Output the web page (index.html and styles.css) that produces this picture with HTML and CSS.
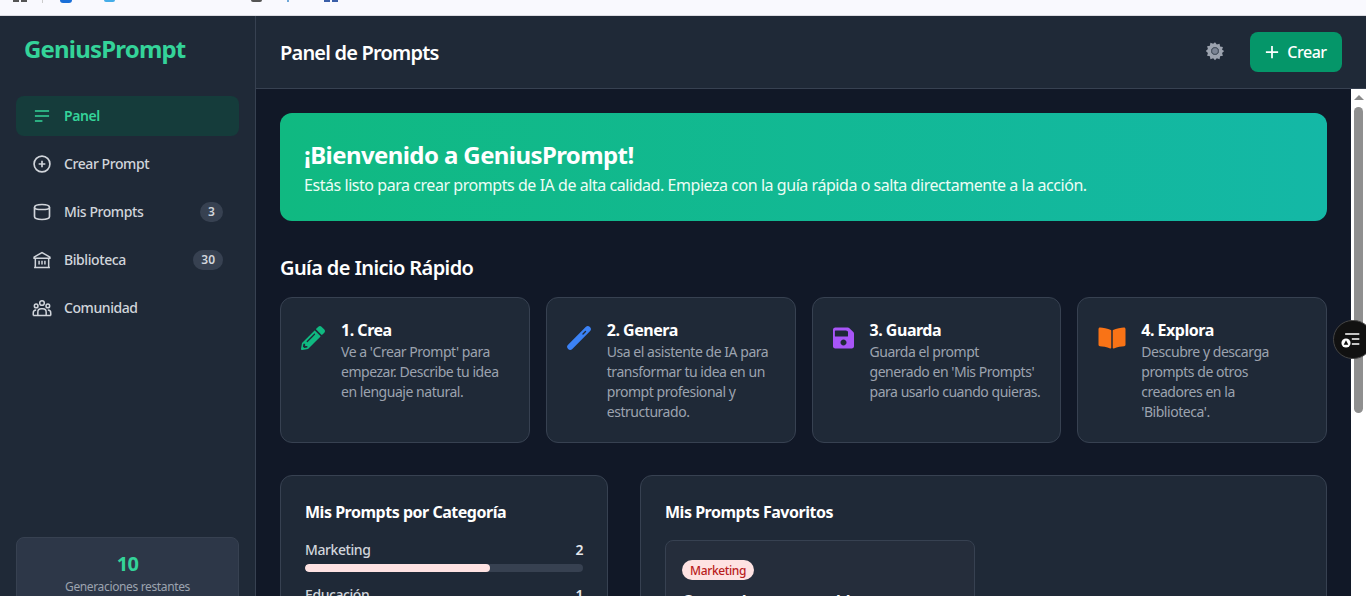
FILE: index.html
```html
<!DOCTYPE html>
<html lang="es">
<head>
<meta charset="utf-8">
<title>GeniusPrompt</title>
<link rel="stylesheet" href="styles.css">
</head>
<body>
<div class="browserstrip">
  <span class="strip-a"></span><span class="strip-b"></span><span class="strip-c"></span><span class="strip-d"></span><span class="strip-e"></span><span class="strip-g"></span><span class="strip-f"></span>
</div>
<div class="app">
  <aside class="sidebar">
    <div class="logo">GeniusPrompt</div>
    <nav class="nav">
      <a class="nav-item active">
        <svg class="nav-icon" viewBox="0 0 24 24" fill="none" stroke="currentColor" stroke-width="2"><path d="M3.500 6h17M3.500 12h17M3.500 18h9"/></svg>
        <span>Panel</span>
      </a>
      <a class="nav-item">
        <svg class="nav-icon" viewBox="0 0 24 24" fill="none" stroke="currentColor" stroke-width="2"><circle cx="12" cy="12" r="9.500"/><path d="M12 8v8M8 12h8"/></svg>
        <span>Crear Prompt</span>
      </a>
      <a class="nav-item">
        <svg class="nav-icon" viewBox="0 0 24 24" fill="none" stroke="currentColor" stroke-width="2"><path d="M3 6.500c0-2 4-3.500 9-3.500s9 1.500 9 3.500v11c0 2-4 3.500-9 3.500s-9-1.500-9-3.500z"/><path d="M3 6.500c0 1.500 4 2.500 9 2.500s9-1 9-2.500"/></svg>
        <span>Mis Prompts</span><b class="badge">3</b>
      </a>
      <a class="nav-item">
        <svg class="nav-icon" viewBox="0 0 24 24" fill="none" stroke="currentColor" stroke-width="1.800"><path d="M2.500 8.500L12 3l9.500 5.500v1.500h-19z"/><path d="M4 10v10M20 10v10M8.500 13v4.500M12 13v4.500M15.500 13v4.500M2.500 21h19"/></svg>
        <span>Biblioteca</span><b class="badge">30</b>
      </a>
      <a class="nav-item">
        <svg class="nav-icon" viewBox="0 0 24 24" fill="none" stroke="currentColor" stroke-width="1.800"><circle cx="12" cy="6" r="2.800"/><circle cx="5" cy="9.500" r="2.200"/><circle cx="19" cy="9.500" r="2.200"/><path d="M7 21v-4a4 4 0 0 1 4-4h2a4 4 0 0 1 4 4v4zM1.500 21v-3a3.500 3.500 0 0 1 3.500-3.500M22.500 21v-3a3.500 3.500 0 0 0-3.500-3.500M1.500 21h21"/></svg>
        <span>Comunidad</span>
      </a>
    </nav>
    <div class="credits">
      <div class="credits-num">10</div>
      <div class="credits-label">Generaciones restantes</div>
    </div>
  </aside>
  <div class="main">
    <header class="topbar">
      <h1 class="title">Panel de Prompts</h1>
      <div class="actions">
        <svg class="gear" viewBox="0 0 24 24"><path fill="#9ca3af" fill-rule="evenodd" d="M12 1.500l2.200 2.700 3.300-1 .6 3.400 3.400.6-1 3.300L23 12l-2.500 2.500 1 3.300-3.400.6-.6 3.400-3.300-1L12 23l-2.200-2.200-3.300 1-.6-3.400-3.400-.6 1-3.300L1 12l2.500-2.500-1-3.300 3.400-.6.6-3.400 3.300 1zM12 7.500a4.500 4.500 0 1 0 0 9 4.500 4.500 0 0 0 0-9z"/><circle cx="12" cy="12" r="4" fill="#7b8494" stroke="#4b5563" stroke-width="1"/></svg>
        <button class="create"><svg class="plus" viewBox="0 0 16 16" fill="none" stroke="currentColor" stroke-width="2"><path d="M8 1v14M1 8h14"/></svg>Crear</button>
      </div>
    </header>
    <div class="scrollwrap">
      <main class="content">
        <section class="hero">
          <h2>¡Bienvenido a GeniusPrompt!</h2>
          <p>Estás listo para crear prompts de IA de alta calidad. Empieza con la guía rápida o salta directamente a la acción.</p>
        </section>
        <h3 class="guide-title">Guía de Inicio Rápido</h3>
        <section class="steps">
          <article class="step">
            <svg class="step-icon green" viewBox="0 0 512 512"><path fill="currentColor" d="M497.900 142.100l-46.100 46.100c-4.700 4.700-12.300 4.700-17 0l-111-111c-4.700-4.700-4.700-12.300 0-17l46.100-46.100c18.700-18.700 49.100-18.700 67.900 0l60.100 60.100c18.800 18.700 18.800 49.100 0 67.900zM284.200 99.800L21.600 362.400.4 483.900c-2.900 16.400 11.400 30.600 27.800 27.800l121.500-21.300 262.600-262.600c4.700-4.700 4.700-12.300 0-17l-111-111c-4.800-4.700-12.400-4.700-17.100 0zM124.100 339.900c-5.500-5.500-5.500-14.300 0-19.800l154-154c5.500-5.500 14.300-5.500 19.800 0s5.500 14.300 0 19.800l-154 154c-5.500 5.500-14.300 5.500-19.800 0zM88 424h48v36.300l-64.500 11.300-31.100-31.100L51.700 376H88v48z"/></svg>
            <div class="step-body"><h4>1. Crea</h4><p>Ve a 'Crear Prompt' para empezar. Describe tu idea en lenguaje natural.</p></div>
          </article>
          <article class="step">
            <svg class="step-icon blue" viewBox="0 0 24 24" fill="none"><path d="M3.200 20.800L20.800 3.200" stroke="currentColor" stroke-width="6" stroke-linecap="round"/><path d="M16 8l2.500-2.500" stroke="#1f2937" stroke-width="1.400" stroke-linecap="round"/></svg>
            <div class="step-body"><h4>2. Genera</h4><p>Usa el asistente de IA para transformar tu idea en un prompt profesional y estructurado.</p></div>
          </article>
          <article class="step">
            <svg class="step-icon purple" viewBox="0 0 448 512"><path fill="currentColor" d="M433.900 129.900l-83.900-83.900A48 48 0 0 0 316.100 32H48C21.500 32 0 53.500 0 80v352c0 26.500 21.500 48 48 48h352c26.500 0 48-21.500 48-48V163.900a48 48 0 0 0-14.100-34zM224 416c-35.300 0-64-28.700-64-64 0-35.300 28.700-64 64-64s64 28.700 64 64c0 35.300-28.700 64-64 64zm96-304.500V212c0 6.600-5.400 12-12 12H52c-6.600 0-12-5.400-12-12V108c0-6.600 5.400-12 12-12h228.500c3.200 0 6.200 1.300 8.500 3.500l3.500 3.500c2.200 2.300 3.500 5.300 3.500 8.500z"/></svg>
            <div class="step-body"><h4>3. Guarda</h4><p>Guarda el prompt generado en 'Mis Prompts' para usarlo cuando quieras.</p></div>
          </article>
          <article class="step step-last">
            <svg class="step-icon orange" viewBox="0 0 576 512"><path fill="currentColor" d="M542.200 32.100c-54.800 3.100-163.700 14.400-231 55.600-4.600 2.800-7.300 7.900-7.300 13.200v364.400c0 11.600 12.600 18.900 23.300 13.500 69.200-34.800 169.200-44.300 218.700-46.900 16.900-.9 30.100-14.400 30.100-30.700V62.800c0-17.800-15.400-31.700-33.800-30.700zM264.700 87.600C197.500 46.500 88.600 35.200 33.800 32.100 15.400 31.100 0 45 0 62.800V401.600c0 16.400 13.200 29.900 30.100 30.700 49.500 2.600 149.600 12.100 218.800 47 10.700 5.400 23.200-1.900 23.200-13.500V100.600c0-5.300-2.600-10.200-7.400-13z"/></svg>
            <div class="step-body"><h4>4. Explora</h4><p>Descubre y descarga prompts de otros creadores en la 'Biblioteca'.</p></div>
          </article>
        </section>
        <section class="panels">
          <article class="panel cats">
            <h4 class="panel-title">Mis Prompts por Categoría</h4>
            <div class="cat-row"><span>Marketing</span><b>2</b></div>
            <div class="bar"><div class="fill" style="width:66.600%"></div></div>
            <div class="cat-row"><span>Educación</span><b>1</b></div>
          </article>
          <article class="panel favs">
            <h4 class="panel-title">Mis Prompts Favoritos</h4>
            <div class="fav-card">
              <span class="tag">Marketing</span>
              <div class="fav-title">Correo de ventas en blog</div>
            </div>
          </article>
        </section>
      </main>
      <div class="scrollbar"><span class="arrow"></span><span class="thumb"></span></div>
    </div>
  </div>
</div>
<div class="floater">
  <svg viewBox="0 0 24 24" fill="none" stroke="#fff" stroke-width="1.600"><path d="M5 6h17M13 12h9M13 18h9"/><circle cx="6" cy="16.800" r="5.500" fill="#fff" stroke="none"/><path d="M6 13.500l-2.800 5.500h5.600z" fill="#111" stroke="none"/></svg>
</div>
</body>
</html>
```
FILE: styles.css
```css
* { box-sizing: border-box; letter-spacing: -.03em; }
html, body { margin: 0; height: 100%; overflow: hidden; }
body { font-family: "Noto Sans", sans-serif; background: #111827; color: #fff; display: flex; flex-direction: column; position: relative; }
.browserstrip { height: 16px; flex: none; background: #f9f9fe; border-bottom: 1px solid #dcdce2; display: flex; align-items: flex-start; overflow: hidden; }
.browserstrip span { display: block; flex: none; }
.strip-a { width: 14px; height: 2px; margin-left: 13px; background: linear-gradient(90deg,#555 0 6px,transparent 6px 8px,#555 8px); }
.strip-b { width: 1px; height: 3px; margin-left: 15px; background: #ccc; }
.strip-c { width: 12px; height: 3px; margin-left: 17px; background: #1a6fd8; border-radius: 0 0 6px 6px; }
.strip-d { width: 11px; height: 2px; margin-left: 32px; background: #45ade8; border-radius: 0 0 6px 6px; }
.strip-e { width: 11px; height: 2px; margin-left: 136px; background: #555; border-radius: 0 0 5px 5px; }
.strip-g { width: 2px; height: 2px; margin-left: 25px; background: #6fa8d8; }
.strip-f { width: 14px; height: 2px; margin-left: 35px; background: linear-gradient(90deg,#3b5fa8 0 6px,transparent 6px 8px,#3b5fa8 8px); }
.app { flex: 1; display: flex; min-height: 0; }
.sidebar { width: 256px; flex: none; background: #1f2937; border-right: 1px solid #374151; display: flex; flex-direction: column; padding: 15px 16px 0; overflow: hidden; }
.logo { font-size: 24px; line-height: 36px; font-weight: 700; letter-spacing: -.034em; color: #34d399; padding-left: 8px; margin-bottom: 29px; }
.nav { display: flex; flex-direction: column; gap: 8px; flex: 1; }
.nav-item { height: 40px; display: flex; align-items: center; gap: 12px; padding: 0 16px; border-radius: 8px; color: #d1d5db; font-size: 14px; font-weight: 500; }
.nav-item span { padding-bottom: 2px; }
.nav-item.active { background: #153c3b; color: #34d399; font-weight: 600; }
.nav-icon { width: 20px; height: 20px; flex: none; }
.badge { margin-left: auto; min-width: 23px; height: 20px; padding: 0 8px; border-radius: 10px; background: #374151; color: #d1d5db; font-size: 12px; font-weight: 600; line-height: 20px; text-align: center; letter-spacing: 0; }
.credits { height: 82px; flex: none; margin-bottom: -23px; background: #2d3748; border: 1px solid #374151; border-radius: 8px; padding: 12px; text-align: center; }
.credits-num { font-size: 20px; line-height: 28px; font-weight: 700; color: #34d399; }
.credits-label { font-size: 12px; line-height: 16px; color: #9ca3af; margin-top: 1px; }
.main { flex: 1; min-width: 0; display: flex; flex-direction: column; }
.topbar { height: 73px; flex: none; background: #1f2937; border-bottom: 1px solid #374151; display: flex; align-items: center; justify-content: space-between; padding: 0 24px; }
.title { margin: 0; padding-top: 2px; font-size: 20px; font-weight: 600; line-height: 28px; letter-spacing: -.04em; }
.actions { display: flex; align-items: center; gap: 25px; }
.gear { width: 20px; height: 20px; margin-bottom: 2px; }
.create { height: 40px; width: 92px; background: #059669; color: #fff; border: 0; border-radius: 8px; font: 500 16px "Noto Sans", sans-serif; display: flex; align-items: center; justify-content: center; gap: 8px; }
.plus { width: 14px; height: 14px; }
.scrollwrap { flex: 1; min-height: 0; display: flex; }
.content { flex: 1; min-width: 0; padding: 24px; overflow: hidden; }
.hero { height: 108px; border-radius: 12px; padding: 24px; background: linear-gradient(90deg,#10b981,#14b8a6); margin-bottom: 32px; }
.hero h2 { margin: 0; font-size: 24px; line-height: 36px; font-weight: 700; letter-spacing: -.025em; }
.hero p { margin: 0; font-size: 16px; line-height: 24px; color: #ecfdf5; letter-spacing: -.028em; }
.guide-title { margin: 0 0 14px; font-size: 20px; line-height: 30px; font-weight: 600; }
.steps { display: grid; grid-template-columns: repeat(4, 1fr); gap: 16px; margin-bottom: 32px; }
.step { height: 146px; background: #1f2937; border: 1px solid #374151; border-radius: 12px; padding: 21px 19px 21px 20px; display: flex; align-items: flex-start; gap: 16px; }
.step-last { padding-right: 24px; }
.step-icon { flex: none; width: 24px; height: 24px; margin-top: 7px; }
.green { color: #10b981; }
.blue { color: #3b82f6; }
.purple { color: #a855f7; width: 21px; }
.orange { color: #f97316; width: 28px; margin-right: -1px; }
.step-body { min-width: 0; }
.step h4 { margin: 0; font-size: 16px; line-height: 23px; font-weight: 700; }
.step p { margin: 0; font-size: 14px; line-height: 20px; color: #9ca3af; letter-spacing: -.033em; }
.panels { display: grid; grid-template-columns: 328px 1fr; gap: 32px; }
.panel { height: 300px; background: #1f2937; border: 1px solid #374151; border-radius: 12px; padding: 24px; }
.panel-title { margin: 0 0 16px; font-size: 16px; line-height: 24px; font-weight: 700; }
.cat-row { display: flex; justify-content: space-between; font-size: 14px; line-height: 20px; color: #d1d5db; font-weight: 500; margin-bottom: 4px; }
.cat-row b { font-weight: 600; color: #e5e7eb; }
.bar { height: 8px; border-radius: 4px; background: #374151; margin-bottom: 13px; overflow: hidden; }
.fill { height: 100%; background: #fee2e2; border-radius: 4px; }
.fav-card { width: 310px; height: 200px; background: #252d3b; border: 1px solid #374151; border-radius: 8px; padding: 19px 16px; }
.tag { display: block; width: fit-content; height: 20px; padding: 0 8px; border-radius: 10px; background: #fee2e2; color: #b91c1c; font-size: 12px; line-height: 21px; font-weight: 500; }
.fav-title { margin-top: 11px; font-size: 16px; font-weight: 700; line-height: 20px; }
.scrollbar { width: 15px; flex: none; background: #fff; display: flex; flex-direction: column; align-items: center; }
.arrow { margin-top: 6px; width: 0; height: 0; border-left: 5px solid transparent; border-right: 5px solid transparent; border-bottom: 5px solid #8a8a8a; }
.thumb { margin-top: 7px; width: 9px; height: 306px; background: #8f8f8f; border-radius: 5px; }
.floater { position: absolute; left: 1333px; top: 320px; width: 40px; height: 39px; border-radius: 20px; background: #111; border: 1px solid #444; padding: 8px 12px 8px 7px; }
.floater svg { display: block; width: 20px; height: 20px; }
```
